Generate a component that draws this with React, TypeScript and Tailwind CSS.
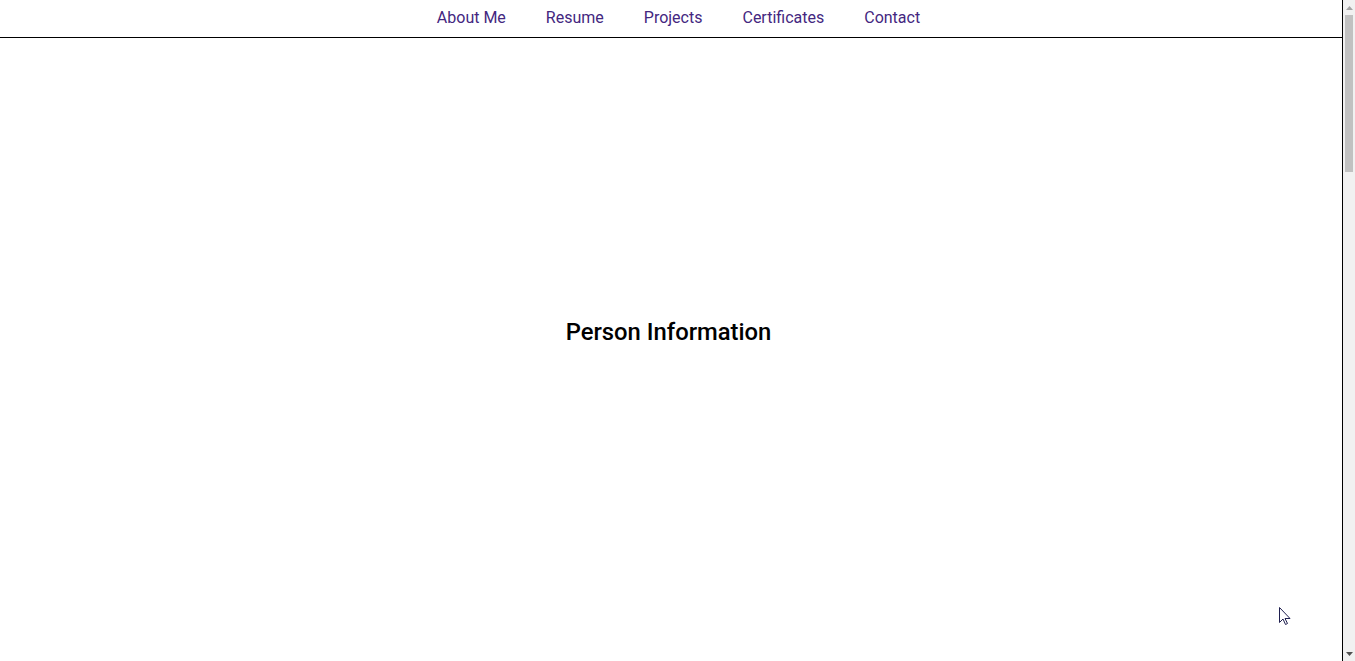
import React from "react";

const items = ["About Me", "Resume", "Projects", "Certificates", "Contact"];

export default function App() {
  return (
    <div
      className="relative flex h-[661px] w-[1355px] overflow-hidden bg-white"
      style={{ fontFamily: "Roboto, 'Liberation Sans', sans-serif" }}
    >
      <div className="flex w-[1343px] flex-col border-r border-black">
        <header className="h-[38px] border-b border-black">
          <nav className="flex justify-center gap-[40px] pl-[15px] pt-[6px]">
            {items.map((t) => (
              <a key={t} className="text-[16px] leading-6 text-[#44277f]">
                {t}
              </a>
            ))}
          </nav>
        </header>
        <main className="flex flex-1 justify-center pr-[5px] pt-[278px]">
          <h1 className="text-[23.8px] font-medium leading-8 text-black">Person Information</h1>
        </main>
      </div>
      <div className="flex w-[12px] flex-col bg-[#f1f1f1]">
        <div className="flex h-[15px] items-center justify-center">
          <svg width="7" height="4" viewBox="0 0 7 4">
            <polygon points="0,4 7,4 3.5,0" fill="#a3a3a3" />
          </svg>
        </div>
        <div className="mx-[2px] h-[157px] bg-[#c1c1c1]" />
        <div className="flex-1" />
        <div className="flex h-[15px] items-center justify-center">
          <svg width="7" height="4" viewBox="0 0 7 4">
            <polygon points="0,0 7,0 3.5,4" fill="#505050" />
          </svg>
        </div>
      </div>
      <svg
        className="absolute left-[1279px] top-[607px]"
        width="13"
        height="20"
        viewBox="0 0 13 20"
      >
        <path
          d="M0.5 0.5 L0.5 15.5 L4 12 L6.5 17.5 L8.5 16.5 L6 11.5 L11 11.5 Z"
          fill="white"
          stroke="#1f1f4f"
          strokeWidth="1"
        />
      </svg>
    </div>
  );
}
